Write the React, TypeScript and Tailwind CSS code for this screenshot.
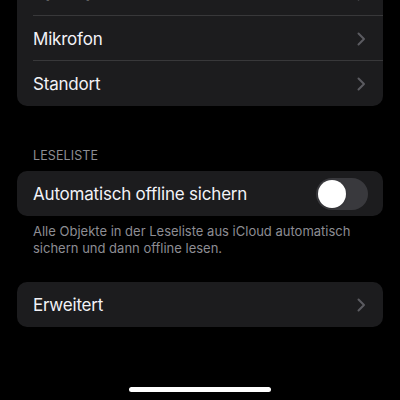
import { ReactNode } from "react";

const font = { fontFamily: "Inter, 'Noto Sans', sans-serif" };

function Chevron() {
  return (
    <svg width="9" height="14" viewBox="0 0 9 14" fill="none" className="shrink-0 mt-[1px]">
      <path d="M1.5 1.5L7 7l-5.5 5.5" stroke="#5b5b60" strokeWidth="2" strokeLinecap="round" strokeLinejoin="round" />
    </svg>
  );
}

function Row({ label, last, right }: { label: string; last?: boolean; right?: ReactNode }) {
  return (
    <div className="flex items-stretch pl-4">
      <div className={`flex flex-1 items-center justify-between h-[45px] pr-[17px] ${last ? "" : "border-b border-[#38383a]"}`}>
        <span className="pt-[3px] text-[17px] text-[#f2f2f7] tracking-[-0.2px]">{label}</span>
        {right ?? <Chevron />}
      </div>
    </div>
  );
}

function Toggle() {
  return (
    <div className="w-[52px] h-[32px] rounded-full bg-[#39393d] p-[2px] flex items-center -mr-[1px]">
      <div className="w-[28px] h-[28px] rounded-full bg-white shadow" />
    </div>
  );
}

export default function App() {
  return (
    <div className="w-[400px] h-[400px] bg-black overflow-hidden flex flex-col" style={font}>
      <div className="mx-[17px] -mt-[29px] rounded-[10px] bg-[#1c1c1e]">
        <Row label="Kamera" />
        <Row label="Mikrofon" />
        <Row label="Standort" last />
      </div>

      <div className="mt-[42px] px-[33px] text-[12.5px] text-[#8d8d93] uppercase leading-[16px] tracking-[0.1px]">
        Leseliste
      </div>

      <div className="mx-[17px] mt-[7px] rounded-[10px] bg-[#1c1c1e]">
        <div className="flex items-center justify-between h-[45px] pl-4 pr-4">
          <span className="pt-[2px] text-[17px] text-[#f2f2f7] tracking-[-0.2px]">Automatisch offline sichern</span>
          <Toggle />
        </div>
      </div>

      <p className="mt-[7px] px-[33px] text-[13px] leading-[17px] text-[#8d8d93]">
        Alle Objekte in der Leseliste aus iCloud automatisch sichern und dann offline lesen.
      </p>

      <div className="mx-[17px] mt-[25px] rounded-[10px] bg-[#1c1c1e]">
        <Row label="Erweitert" last />
      </div>

      <div className="flex-1" />
      <div className="flex justify-center pb-[8px]">
        <div className="w-[142px] h-[5px] rounded-full bg-white" />
      </div>
    </div>
  );
}
